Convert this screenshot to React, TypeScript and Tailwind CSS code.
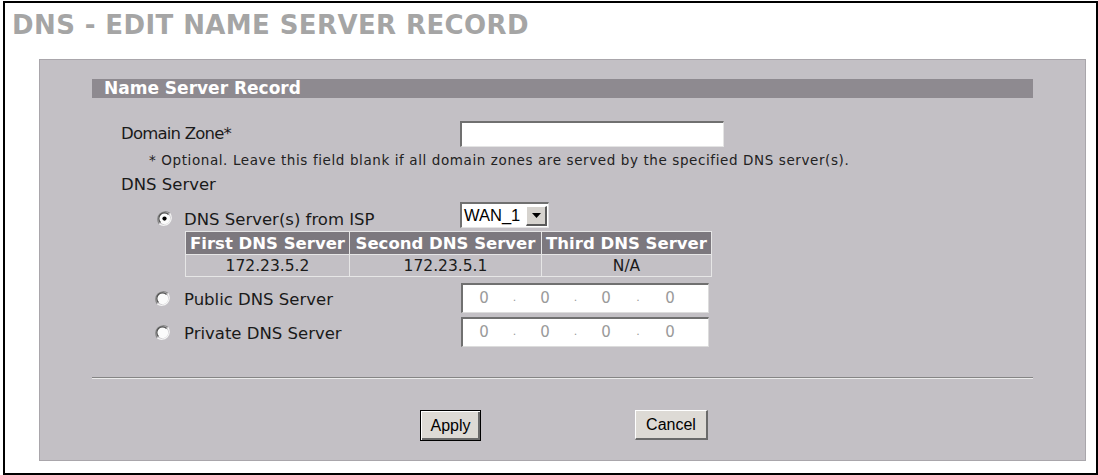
import React from 'react';

const sans = "font-['DejaVu_Sans',Verdana,sans-serif]";
const arial = "font-['Liberation_Sans',Arial,sans-serif]";

function Radio({ checked }: { checked?: boolean }) {
  return (
    <svg width="15" height="15" viewBox="0 0 12 12" className="shrink-0">
      <path d="M10.2 1.8A6 6 0 0 0 1.8 10.2" fill="none" stroke="#8a8a8a" strokeWidth="1" />
      <path d="M1.8 10.2A6 6 0 0 0 10.2 1.8" fill="none" stroke="#f4f4f4" strokeWidth="1" />
      <circle cx="6" cy="6" r="4.6" fill="#fbfbfb" />
      <path d="M9.2 2.8A4.5 4.5 0 0 0 2.8 9.2" fill="none" stroke="#4a4a4a" strokeWidth="0.9" />
      {checked && <circle cx="6" cy="6" r="1.7" fill="#000" />}
    </svg>
  );
}

function IpBox() {
  return (
    <div className={`${sans} w-[248px] h-[30px] bg-white border-t-2 border-l-2 border-[#707070] border-b border-r border-b-[#dcdcdc] border-r-[#dcdcdc] flex items-center text-[15px] text-[#9a9a9a]`}>
      <span className="w-[16px]" />
      <span className="w-[10px] text-center">0</span>
      <span className="w-[51px] text-center text-[11px]">.</span>
      <span className="w-[10px] text-center">0</span>
      <span className="w-[51px] text-center text-[11px]">.</span>
      <span className="w-[10px] text-center">0</span>
      <span className="w-[54px] text-center text-[11px]">.</span>
      <span className="w-[10px] text-center">0</span>
    </div>
  );
}

export default function App() {
  return (
    <div className="w-[1098px] h-[475px] bg-white pt-[1px] pl-[3px]">
      <div className="w-[1095px] h-[474px] border-2 border-black">
        <h1 className={`${sans} ml-[7px] mt-[9px] text-[26px] leading-[26px] font-bold text-[#a5a5a5] tracking-[0.4px]`}>
          DNS - EDIT NAME SERVER RECORD
        </h1>

        <div className="ml-[34px] mt-[21px] w-[1047px] h-[402px] bg-[#c3c0c5] border border-[#a9a6ab]">
          <div className={`${sans} ml-[52px] mt-[19px] w-[941px] h-[19px] bg-[#8e8a90] pl-[12px] text-[17px] leading-[19px] font-bold text-white`}>
            Name Server Record
          </div>

          <div className={`${sans} text-[16.5px] text-[#1a1a1a]`}>
            <div className="mt-[23px] ml-[81px] flex items-center h-[26px]">
              <span className="w-[339px] leading-[20px] tracking-[-0.8px]">Domain Zone*</span>
              <div className="w-[264px] h-[26px] bg-white border-t-2 border-l-2 border-[#707070] border-b border-r border-b-[#e4e4e4] border-r-[#e4e4e4]" />
            </div>

            <p className="mt-[5px] ml-[109px] text-[13.5px] leading-[16px] tracking-[0.6px] text-[#222]">
              * Optional. Leave this field blank if all domain zones are served by the specified DNS server(s).
            </p>

            <p className="mt-[7px] ml-[81px] leading-[20px]">DNS Server</p>

            <div className="mt-[7px] flex items-start h-[26px]">
              <div className="ml-[117px] w-[303px] flex items-start">
                <span className="mt-[9px]">
                  <Radio checked />
                </span>
                <span className="ml-[12px] mt-[8px] leading-[20px]">DNS Server(s) from ISP</span>
              </div>
              <div className={`${arial} w-[89px] h-[26px] bg-white border-t-2 border-l-2 border-[#707070] border-b border-r border-b-[#e4e4e4] border-r-[#e4e4e4] flex items-center justify-between pl-[2px] pr-[1px] text-[16.5px] text-black`}>
                <span>WAN_1</span>
                <span className="w-[21px] h-[20px] bg-[#d6d3ce] border-t border-l border-white border-b-2 border-r-2 border-b-[#5a5a5a] border-r-[#5a5a5a] flex items-center justify-center">
                  <svg width="9" height="5" viewBox="0 0 9 5">
                    <path d="M0 0h9L4.5 5z" fill="#000" />
                  </svg>
                </span>
              </div>
            </div>

            <table className="mt-[3px] ml-[145px] w-[527px] border-collapse border border-[#e6e6e6]">
              <thead>
                <tr className="h-[23px] bg-[#7c787e] text-white font-bold">
                  <th className="w-[164px] border border-[#e6e6e6] p-0 font-bold leading-[21px]">First DNS Server</th>
                  <th className="w-[192px] border border-[#e6e6e6] p-0 font-bold leading-[21px]">Second DNS Server</th>
                  <th className="border border-[#e6e6e6] p-0 font-bold leading-[21px]">Third DNS Server</th>
                </tr>
              </thead>
              <tbody>
                <tr className="h-[22px] text-[15.5px] text-[#1a1a1a]">
                  <td className="border border-[#e6e6e6] text-center p-0 leading-[20px]">172.23.5.2</td>
                  <td className="border border-[#e6e6e6] text-center p-0 leading-[20px]">172.23.5.1</td>
                  <td className="border border-[#e6e6e6] text-center p-0 leading-[20px]">N/A</td>
                </tr>
              </tbody>
            </table>

            <div className="mt-[6px] flex items-center h-[30px]">
              <div className="ml-[115px] w-[306px] flex items-center">
                <Radio />
                <span className="ml-[14px] mt-[4px] leading-[20px]">Public DNS Server</span>
              </div>
              <IpBox />
            </div>
            <div className="mt-[4px] flex items-center h-[30px]">
              <div className="ml-[115px] w-[306px] flex items-center">
                <Radio />
                <span className="ml-[14px] mt-[4px] leading-[20px]">Private DNS Server</span>
              </div>
              <IpBox />
            </div>
          </div>

          <div className="mt-[30px] ml-[52px] w-[941px] border-t border-[#858585] border-b border-b-[#ebebeb]" />

          <div className={`${arial} mt-[31px] flex items-start text-[16px] text-black`}>
            <button className="ml-[380px] w-[61px] h-[31px] border border-black bg-[#dddad5] shadow-[inset_1px_1px_0_#fff,inset_-2px_-2px_0_#6a6a6a]">
              Apply
            </button>
            <button className="ml-[154px] w-[73px] h-[30px] bg-[#dddad5] border-t border-l border-white border-b-2 border-r-2 border-b-[#6a6a6a] border-r-[#6a6a6a]">
              Cancel
            </button>
          </div>
        </div>
      </div>
    </div>
  );
}
